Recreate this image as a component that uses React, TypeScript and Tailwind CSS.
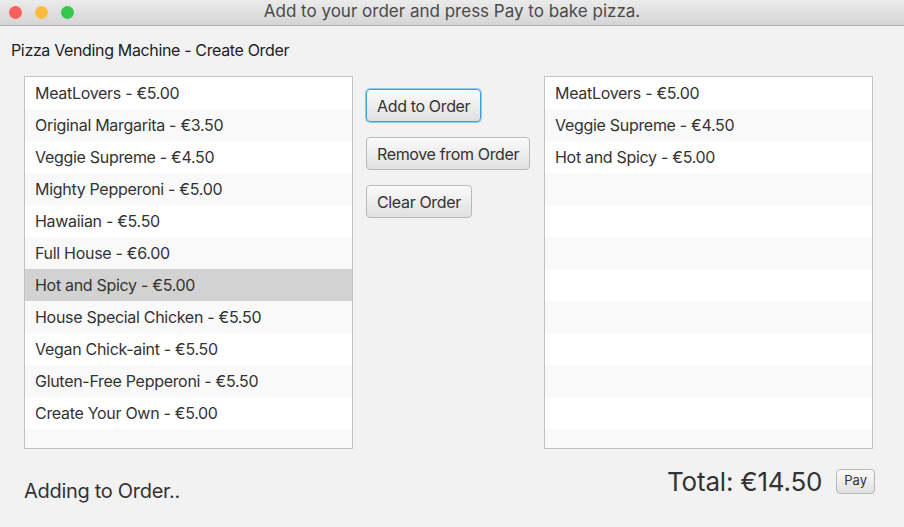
import React from 'react';

const MENU = [
  'MeatLovers - €5.00',
  'Original Margarita - €3.50',
  'Veggie Supreme - €4.50',
  'Mighty Pepperoni - €5.00',
  'Hawaiian - €5.50',
  'Full House - €6.00',
  'Hot and Spicy - €5.00',
  'House Special Chicken - €5.50',
  'Vegan Chick-aint - €5.50',
  'Gluten-Free Pepperoni - €5.50',
  'Create Your Own - €5.00',
];

const ORDER = ['MeatLovers - €5.00', 'Veggie Supreme - €4.50', 'Hot and Spicy - €5.00'];

const font = { fontFamily: 'Inter, "Noto Sans", sans-serif' };

function ListView({ items, selected }: { items: string[]; selected?: number }) {
  const rows = Array.from({ length: 12 }, (_, i) => items[i] ?? '');
  return (
    <div className="w-[329px] h-[373px] border border-[#c2c2c2] bg-white overflow-hidden">
      {rows.map((t, i) => (
        <div
          key={i}
          className={
            'h-[32px] shrink-0 flex items-center px-[10px] text-[16px] tracking-[-0.3px] text-[#333] ' +
            (i === selected ? 'bg-[#d2d2d2]' : i % 2 === 1 ? 'bg-[#f9f9f9]' : 'bg-white')
          }
        >
          {t}
        </div>
      ))}
    </div>
  );
}

function Btn({ children, focused }: { children: React.ReactNode; focused?: boolean }) {
  return (
    <button
      className={
        'h-[33px] px-[10px] rounded-[4px] text-[16px] tracking-[-0.35px] text-[#333] bg-gradient-to-b from-[#fbfbfb] to-[#e0e0e0] border ' +
        (focused ? 'border-[#3aa1d8] ring-1 ring-[#8fcbeb]' : 'border-[#b9b9b9]')
      }
    >
      {children}
    </button>
  );
}

export default function App() {
  return (
    <div className="w-[904px] h-[527px] bg-[#f2f2f2] flex flex-col overflow-hidden" style={font}>
      {/* title bar */}
      <div className="h-[26px] shrink-0 relative flex items-center justify-center bg-gradient-to-b from-[#ebebeb] to-[#d5d5d5] border-b border-[#b3b3b3]">
        <div className="absolute left-[9px] top-[6px] flex gap-[13px]">
          <span className="w-[13px] h-[13px] rounded-full bg-[#fc605c]" />
          <span className="w-[13px] h-[13px] rounded-full bg-[#fdbc40]" />
          <span className="w-[13px] h-[13px] rounded-full bg-[#34c84a]" />
        </div>
        <span className="text-[17px] text-[#4a4a4a] -mt-[2px]">Add to your order and press Pay to bake pizza.</span>
      </div>

      <div className="pl-[11px] pt-[13px] text-[16px] text-[#222] leading-[22px] tracking-[-0.35px]">
        Pizza Vending Machine - Create Order
      </div>

      <div className="flex pl-[24px] pt-[15px]">
        <ListView items={MENU} selected={6} />
        <div className="ml-[13px] pt-[13px] flex flex-col items-start gap-[15px] w-[178px]">
          <Btn focused>Add to Order</Btn>
          <Btn>Remove from Order</Btn>
          <Btn>Clear Order</Btn>
        </div>
        <ListView items={ORDER} />
      </div>

      <div className="flex items-center pl-[24px] pr-[29px] mt-[7px]">
        <span className="text-[20px] tracking-[-0.3px] text-[#333] mt-[20px]">Adding to Order..</span>
        <span className="ml-auto text-[26px] tracking-[-0.2px] text-[#333]">Total: €14.50</span>
        <button className="ml-[14px] h-[25px] px-[7px] rounded-[4px] text-[13px] text-[#333] bg-gradient-to-b from-[#fbfbfb] to-[#e0e0e0] border border-[#b9b9b9]">
          Pay
        </button>
      </div>
    </div>
  );
}
